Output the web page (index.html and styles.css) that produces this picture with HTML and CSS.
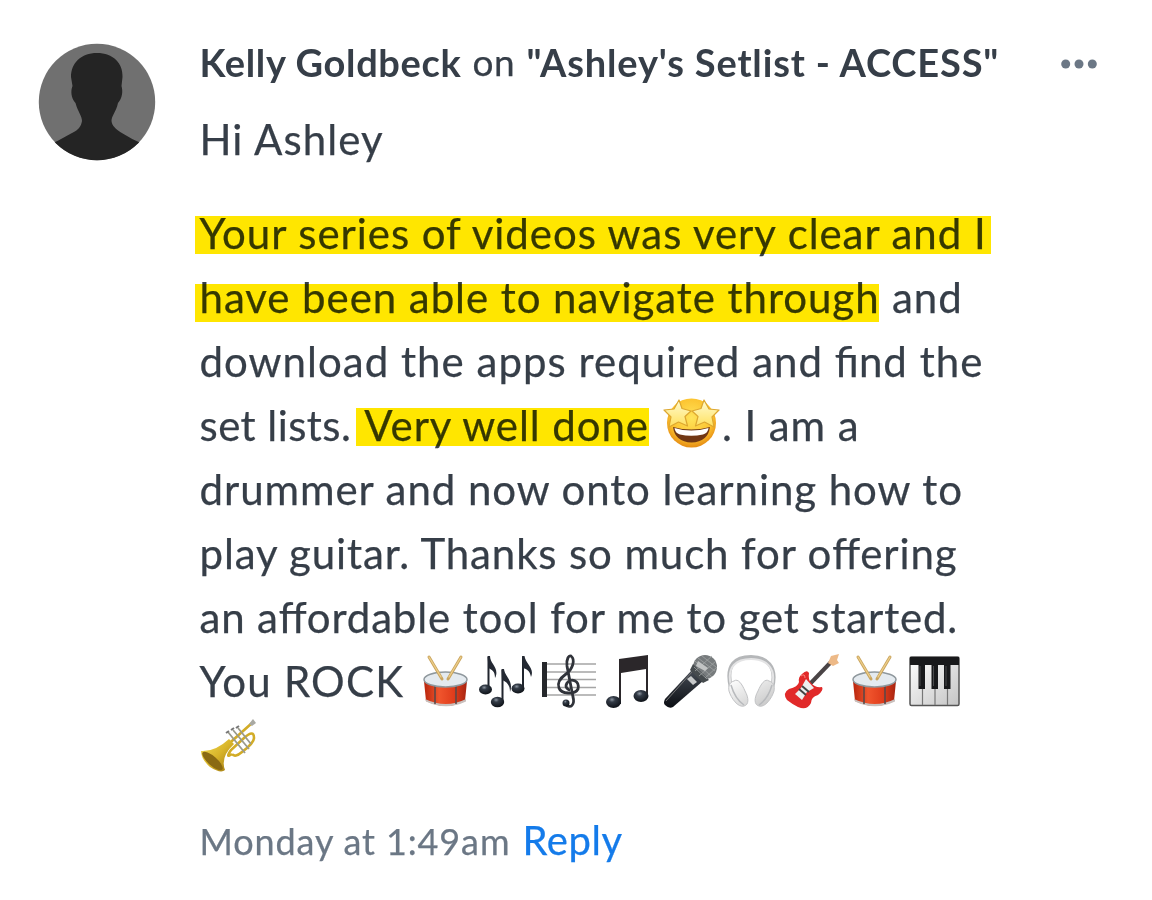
FILE: index.html
```html
<!DOCTYPE html>
<html lang="en"><head><meta charset="utf-8"><title>Comment</title>
<link rel="stylesheet" href="styles.css"></head>
<body>
<svg class="defs" aria-hidden="true"><defs>
<clipPath id="face"><circle cx="59" cy="59" r="58.2"/></clipPath>
<linearGradient id="red" x2="1"><stop offset="0" stop-color="#b8250d"/><stop offset=".35" stop-color="#f0552d"/><stop offset=".7" stop-color="#df3c1b"/><stop offset="1" stop-color="#a62410"/></linearGradient>
<linearGradient id="black" x2="0" y2="1"><stop offset="0" stop-color="#454b54"/><stop offset="1" stop-color="#0b0e13"/></linearGradient>
<linearGradient id="gold" x1="0" y1="0" x2="1" y2="1"><stop offset="0" stop-color="#f3df58"/><stop offset=".5" stop-color="#d9b52a"/><stop offset="1" stop-color="#9a7410"/></linearGradient>
<linearGradient id="silver" x2="1" y2="1"><stop offset="0" stop-color="#fff"/><stop offset="1" stop-color="#c4c4c4"/></linearGradient>
<radialGradient id="ball" cx=".4" cy=".3" r=".7"><stop offset="0" stop-color="#8d96a1"/><stop offset=".3" stop-color="#333b46"/><stop offset="1" stop-color="#0e1218"/></radialGradient>
<radialGradient id="skin" cx=".5" cy=".4" r=".6"><stop offset="0" stop-color="#ffe45b"/><stop offset=".7" stop-color="#fcc22e"/><stop offset="1" stop-color="#e58b13"/></radialGradient>
<linearGradient id="star" x2="0" y2="1"><stop offset="0" stop-color="#fffbd2"/><stop offset="1" stop-color="#ffe15d"/></linearGradient>
<symbol id="drum" viewBox="0 0 55 55"><path d="M6 27Q27 37 49 27L47 47Q28 57 8 47Z" fill="url(#red)"/><path d="M7 45Q28 55 48 45V47.500Q28 57 8 47.500Z" fill="#c9c0bd"/><path d="M17 31v19M38 31v19" stroke="#54484a" stroke-width="1.500"/><ellipse cx="27.500" cy="25.500" rx="21.500" ry="7.500" fill="#e4eaef" stroke="#8f989d" stroke-width="1.500"/><path d="M11 3L24 25M43 3L30 25" stroke="#c9a45e" stroke-width="3" stroke-linecap="round"/><path d="M11 3L23 23M43 3L31 23" stroke="#edce89" stroke-width="1.300" stroke-linecap="round"/></symbol>
</defs></svg>
<article class="comment">
<svg class="avatar" viewBox="0 0 118 118" role="img" aria-label="Kelly Goldbeck"><g clip-path="url(#face)"><path class="av-bg" d="M0 0h118v118H0z"/><path class="av-fg" d="M59 10C43 10 33 20 33 34L34.500 43C32.500 48 33 55 37.500 60C40 69 44 73 44 78C43 84 40 87 35 89.500C30 92 23 96.500 13 101V118H105V101Q94 96.500 83 89.500C78 86 74 83 73.500 78C73.500 73 78 69 80 60C84.500 55 85 48 83.500 43L84.500 34C85 20 75 10 59 10Z"/></g></svg>
<div class="content">
<header class="head"><span class="bold">Kelly Goldbeck</span><span class="on">on</span><span class="bold title">"Ashley's Setlist - ACCESS"</span>
<svg class="more" viewBox="0 0 36 10"><circle cx="4.700" cy="5" r="4.500"/><circle cx="18" cy="5" r="4.500"/><circle cx="31.300" cy="5" r="4.500"/></svg></header>
<div class="greet">Hi Ashley</div>
<div class="body">
<div class="line l1"><span class="mark first">Your series of videos was very clear and I</span></div>
<div class="line l2"><span class="mark second">have been able to navigate through</span><span class="and">and</span></div>
<div class="line l3"><span>download the apps required and <span class="lig">fi</span>nd the</span></div>
<div class="line l4"><span class="lists">set lists.</span><span class="mark third">Very well done</span>
<svg class="emoji wow" viewBox="0 0 55 55"><circle cx="27.500" cy="27" r="24.500" fill="url(#skin)"/><path d="M9 31Q27 36 46 31Q44 46 27.500 46.500Q11 46 9 31Z" fill="#713714"/><path d="M10.500 32Q27 37 44.500 32Q44 37 39 38.500Q27 41 16 38.500Q11 37 10.500 32Z" fill="#fff"/><g fill="url(#star)" stroke="#dda72f" stroke-width="1.200" stroke-linejoin="round"><path d="M15 4L18 12.500 27 15 21 20.500 23.500 30 14.500 26 5 31 7 21 0 14 10 13Z"/><path d="M40 4L37 12.500 28 15 34 20.500 31.500 30 40.500 26 50 31 48 21 55 14 45 13Z"/></g></svg><span>. I am a</span></div>
<div class="line l5"><span>drummer and now onto learning how to</span></div>
<div class="line l6"><span>play guitar. Thanks so much for o<span class="lig">ff</span>ering</span></div>
<div class="line l7"><span>an a<span class="lig">ff</span>ordable tool for me to get started.</span></div>
<div class="line l8"><span>You ROCK</span>
<div class="emojis">
<svg class="emoji"><use href="#drum"/></svg>
<svg class="emoji" viewBox="0 0 55 55"><g fill="none" stroke="#20252e" stroke-width="2"><path d="M9.500 34V3M23.500 47V16M44 33V3"/></g><path d="M8.500 2H11C11 10 21 14 16 24C16 17 13 16 9.500 14ZM22.500 15H25C26 23 35 27 31 38C31 31 28 28 23 26ZM43 2H45.500C46.500 10 56 14 52 23C51 17 48 15 44 14Z" fill="#242933"/><g fill="url(#ball)"><ellipse cx="6.500" cy="35.500" rx="6.500" ry="5"/><ellipse cx="18.500" cy="48" rx="6.700" ry="5.200"/><ellipse cx="39" cy="34.500" rx="6.500" ry="5"/></g></svg>
<svg class="emoji" viewBox="0 0 55 55"><path d="M4 10H55M4 18H55M4 25.500H55M4 33.500H55M4 41H55" stroke="#a5a5a5" stroke-width="1.500"/><path d="M1 8H6V43H1Z" fill="#25272b"/><path d="M24 50C30 56 34 50 32 43L26 12C25 5 28 1 30 2C35 6 31 16 25 20C18 25 16 29 18 34C20 40 34 41 37 35C39 27 30 23 26 29C23 34 28 36 29 36" fill="none" stroke="#30333a" stroke-width="2.800"/><circle cx="25" cy="49" r="3.500" fill="url(#ball)"/></svg>
<svg class="emoji" viewBox="0 0 55 55"><path d="M17 5L46 1V44H44V15L19 19V50H17Z" fill="#2b272a"/><ellipse cx="11.500" cy="48" rx="7.500" ry="6" fill="url(#ball)"/><ellipse cx="39" cy="42" rx="7.500" ry="6" fill="url(#ball)"/></svg>
<svg class="emoji" viewBox="0 0 55 55"><path d="M29 16L40 27 10 53Q6 55 2 51Q0 49 2 45Z" fill="url(#black)"/><path d="M3 47L29 18" stroke="#777" stroke-width="1"/><circle cx="42" cy="13" r="12" fill="#777b7d"/><path d="M30 10L46 26L40 29L27 16Z" fill="#464b4e"/><path d="M32 7L49 23M31 13L44 25M35 4L52 17M39 2L53 13M32 17L49 2M36 22L53 7M42 24L54 13" stroke="#a1a4a5" stroke-width=".8"/><path d="M35 7L45 14L42 17L33 12Z" fill="#c2c4c4"/><path d="M24 25L28 22 34 28 30 31Z" fill="#c7c9ca"/></svg>
<svg class="emoji" viewBox="0 0 55 55"><path d="M7 34C1 10 12 3 27 3S54 12 48 34" fill="none" stroke="#b5b7b9" stroke-width="4"/><path d="M7 32C2 12 13 5 27 5S53 13 48 32" fill="none" stroke="#e4e4e5" stroke-width="2"/><path d="M10 27C14 24 18 30 21 37C25 44 25 51 20 52C14 54 7 44 5 37C4 32 6 28 10 27ZM45 27C41 24 37 30 34 37C30 44 30 51 35 52C41 54 48 44 50 37C51 32 49 28 45 27Z" fill="url(#silver)" stroke="#c2c3c5"/><path d="M7 31Q11 45 20 51M48 31Q44 45 35 51" fill="none" stroke="#b8babd" stroke-width="1.500"/></svg>
<svg class="emoji" viewBox="0 0 55 55"><path d="M23 32L46 8" stroke="#4a4446" stroke-width="4"/><path d="M43 9L46 2 54 0 52 6 54 9 48 12Z" fill="#edb987"/><path d="M17 20Q22 15 24 19Q23 25 26 29Q30 34 37 33Q39 36 33 41Q26 43 26 49Q22 57 13 53Q7 50 2 46Q-3 39 4 35Q13 33 14 28Q13 23 17 20Z" fill="#e12929"/><path d="M21 25L29 34L22 38L17 46L10 40L16 34Z" fill="#eee"/><path d="M14 35L21 41M17 32L24 38" stroke="#444" stroke-width="2"/><path d="M16 22Q20 19 20 24" fill="none" stroke="#ff8177"/></svg>
<svg class="emoji"><use href="#drum"/></svg>
<svg class="emoji" viewBox="0 0 55 55"><rect x="2" y="3" width="49" height="48.500" rx="1.500" fill="url(#silver)" stroke="#555" stroke-width="1.500"/><path d="M14.500 34V51M27 34V51M39.500 34V51" stroke="#777" stroke-width="1.200"/><path d="M2 3H51V11H42.500V35H36V11H30V35H23.500V11H17V35H10.500V11H2Z" fill="#18191b"/><path d="M12 12V32M25.500 12V32M38 12V32" stroke="#4b4c4e"/></svg>
</div></div>
<div class="line l9"><svg class="emoji trumpet" viewBox="0 0 55 55"><g fill="none" stroke="#d2ac26" stroke-width="2.600"><path d="M22 30L51 4M31 35Q24 40 30 31L43 19Q53 10 53 19Q53 24 41 33Q34 39 31 35"/></g><path d="M0 32Q14 33 28 20L33 25Q19 38 24 51Q20 55 9 48Q0 40 0 32Z" fill="url(#gold)"/><ellipse cx="11.500" cy="42" rx="4.500" ry="13" transform="rotate(-49 11.500 42)" fill="#8a6a12"/><path d="M27 13L44 34M32 11L48 30M37 9L50 25" stroke="#9a9a8c" stroke-width="1.800"/><path d="M25 14L28 12M30 11L33 9M35 9L38 7" stroke="#777" stroke-width="2"/><path d="M48 5L52 0L55 4L51 7Z" fill="#a9a9a3"/></svg></div>
</div>
<footer class="foot"><span>Monday at 1:49am</span><a class="reply">Reply</a></footer>
</div></article>
</body></html>
```
FILE: styles.css
```css
body{margin:0;background:#fff;color:#363e48;font-family:Lato,sans-serif;-webkit-text-stroke:.25px}
.defs{position:absolute;width:0;height:0}
.comment{display:flex;padding:43px 0 0 38px}
.avatar{width:118px;height:118px;flex:none}
.av-bg{fill:#707070}
.av-fg{fill:#242424}
.content{margin-left:43.5px;font-size:42px;letter-spacing:.95px;white-space:nowrap}
.head{display:flex;height:44px;line-height:44px;margin-top:-3px;align-items:center;font-size:38px;letter-spacing:.65px}
.bold{font-weight:700;-webkit-text-stroke:0}
.title{letter-spacing:.84px}
.on{margin:0 11px 0 11px;font-size:37px}
.more{width:36px;height:10px;margin-left:61.5px;margin-top:4px;fill:#6b7785}
.greet{height:64px;line-height:64px;margin-top:23px;letter-spacing:1.1px}
.body{padding-top:30px}
.line{display:flex;height:64px;line-height:64px}
.l1{letter-spacing:.95px}
.l2{letter-spacing:.94px}
.l3{letter-spacing:1.02px}
.l4{letter-spacing:.92px}
.l4 .lists{letter-spacing:.45px}
.l5{letter-spacing:.93px}
.l6{letter-spacing:.88px}
.l7{letter-spacing:.85px}
.lig{letter-spacing:0}
.and{margin-left:12.5px}
.mark{position:relative}
.mark::before{content:"";position:absolute;background:#ffe600;mix-blend-mode:multiply;z-index:1;height:37.5px;left:-4.5px;right:-4px;top:15px}
.second::before{top:19px;right:1px}
.third{margin-left:13px}
.third::before{left:-8px;right:0}
.emoji{width:55px;height:55px;flex:none;overflow:visible}
.wow{margin:3px 3px 0 15px}
.l8 > span{letter-spacing:1.2px}
.emojis{display:flex;gap:6.2px;margin:5px 0 0 14px}
.trumpet{margin:6px 0 0 1px}
.foot{display:flex;align-items:baseline;gap:12px;margin-top:31px;font-size:36px;line-height:64px;letter-spacing:.88px;color:#6b7785}
.reply{font-size:40px;letter-spacing:.6px;color:#147bea}
```
